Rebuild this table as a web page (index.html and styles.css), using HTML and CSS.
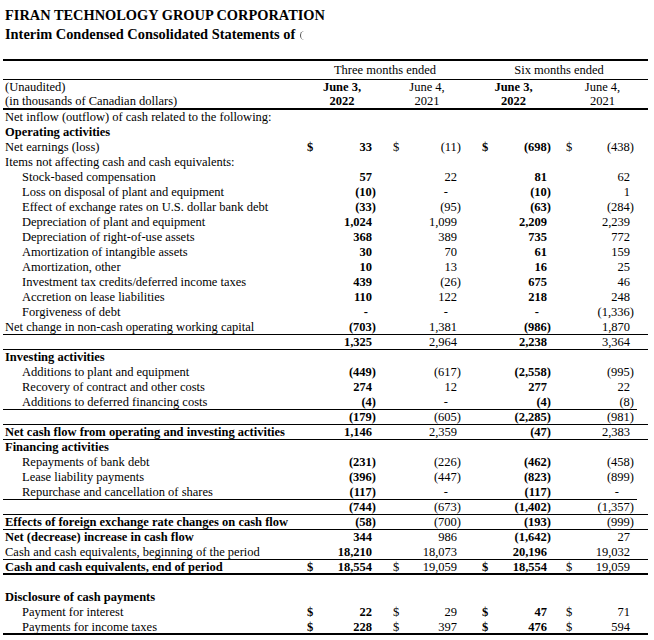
FILE: index.html
```html
<!DOCTYPE html>
<html>
<head>
<meta charset="utf-8">
<link rel="stylesheet" href="styles.css">
</head>
<body>
<div class="page">
  <h1 class="t1">FIRAN TECHNOLOGY GROUP CORPORATION</h1>
  <h2 class="t2">Interim Condensed Consolidated Statements of <span class="clip"></span></h2>
  <table class="cf">
    <colgroup>
      <col class="c0"><col class="c1"><col class="c2"><col class="c3"><col class="c4"><col class="c5"><col class="c6"><col class="c7"><col class="c8">
    </colgroup>
    <thead>
      <tr class="hr1"><td></td><td colspan="4" class="hc">Three months ended</td><td colspan="4" class="hc">Six months ended</td></tr>
      <tr class="hr2"><td class="l">(Unaudited)</td><td colspan="2" class="hc b">June 3,</td><td colspan="2" class="hc">June 4,</td><td colspan="2" class="hc b">June 3,</td><td colspan="2" class="hc">June 4,</td></tr>
      <tr class="hr3"><td class="l">(in thousands of Canadian dollars)</td><td colspan="2" class="hc b">2022</td><td colspan="2" class="hc">2021</td><td colspan="2" class="hc b">2022</td><td colspan="2" class="hc">2021</td></tr>
    </thead>
    <tbody>
      <tr><td class="l" colspan="9">Net inflow (outflow) of cash related to the following:</td></tr>
      <tr><td class="l b" colspan="9">Operating activities</td></tr>
      <tr><td class="l">Net earnings (loss)</td><td class="s">$</td><td class="v">33</td><td class="s">$</td><td class="v n">(11)</td><td class="s">$</td><td class="v n">(698)</td><td class="s">$</td><td class="v n">(438)</td></tr>
      <tr><td class="l" colspan="9">Items not affecting cash and cash equivalents:</td></tr>
      <tr><td class="l i">Stock-based compensation</td><td></td><td class="v">57</td><td></td><td class="v">22</td><td></td><td class="v">81</td><td></td><td class="v">62</td></tr>
      <tr><td class="l i">Loss on disposal of plant and equipment</td><td></td><td class="v n">(10)</td><td></td><td class="v d">-</td><td></td><td class="v n">(10)</td><td></td><td class="v">1</td></tr>
      <tr><td class="l i">Effect of exchange rates on U.S. dollar bank debt</td><td></td><td class="v n">(33)</td><td></td><td class="v n">(95)</td><td></td><td class="v n">(63)</td><td></td><td class="v n">(284)</td></tr>
      <tr><td class="l i">Depreciation of plant and equipment</td><td></td><td class="v">1,024</td><td></td><td class="v">1,099</td><td></td><td class="v">2,209</td><td></td><td class="v">2,239</td></tr>
      <tr><td class="l i">Depreciation of right-of-use assets</td><td></td><td class="v">368</td><td></td><td class="v">389</td><td></td><td class="v">735</td><td></td><td class="v">772</td></tr>
      <tr><td class="l i">Amortization of intangible assets</td><td></td><td class="v">30</td><td></td><td class="v">70</td><td></td><td class="v">61</td><td></td><td class="v">159</td></tr>
      <tr><td class="l i">Amortization, other</td><td></td><td class="v">10</td><td></td><td class="v">13</td><td></td><td class="v">16</td><td></td><td class="v">25</td></tr>
      <tr><td class="l i">Investment tax credits/deferred income taxes</td><td></td><td class="v">439</td><td></td><td class="v n">(26)</td><td></td><td class="v">675</td><td></td><td class="v">46</td></tr>
      <tr><td class="l i">Accretion on lease liabilities</td><td></td><td class="v">110</td><td></td><td class="v">122</td><td></td><td class="v">218</td><td></td><td class="v">248</td></tr>
      <tr><td class="l i">Forgiveness of debt</td><td></td><td class="v d">-</td><td></td><td class="v d">-</td><td></td><td class="v d">-</td><td></td><td class="v n">(1,336)</td></tr>
      <tr class="ul"><td class="l">Net change in non-cash operating working capital</td><td></td><td class="v n">(703)</td><td></td><td class="v">1,381</td><td></td><td class="v n">(986)</td><td></td><td class="v">1,870</td></tr>
      <tr class="ul"><td class="l"></td><td></td><td class="v">1,325</td><td></td><td class="v">2,964</td><td></td><td class="v">2,238</td><td></td><td class="v">3,364</td></tr>
      <tr><td class="l b" colspan="9">Investing activities</td></tr>
      <tr><td class="l i">Additions to plant and equipment</td><td></td><td class="v n">(449)</td><td></td><td class="v n">(617)</td><td></td><td class="v n">(2,558)</td><td></td><td class="v n">(995)</td></tr>
      <tr><td class="l i">Recovery of contract and other costs</td><td></td><td class="v">274</td><td></td><td class="v">12</td><td></td><td class="v">277</td><td></td><td class="v">22</td></tr>
      <tr class="ul sh"><td class="l i">Additions to deferred financing costs</td><td></td><td class="v n">(4)</td><td></td><td class="v d">-</td><td></td><td class="v n">(4)</td><td></td><td class="v n">(8)</td></tr>
      <tr class="ul"><td class="l"></td><td></td><td class="v n">(179)</td><td></td><td class="v n">(605)</td><td></td><td class="v n">(2,285)</td><td></td><td class="v n">(981)</td></tr>
      <tr class="ul"><td class="l b">Net cash flow from operating and investing activities</td><td></td><td class="v">1,146</td><td></td><td class="v">2,359</td><td></td><td class="v n">(47)</td><td></td><td class="v">2,383</td></tr>
      <tr><td class="l b" colspan="9">Financing activities</td></tr>
      <tr><td class="l i">Repayments of bank debt</td><td></td><td class="v n">(231)</td><td></td><td class="v n">(226)</td><td></td><td class="v n">(462)</td><td></td><td class="v n">(458)</td></tr>
      <tr><td class="l i">Lease liability payments</td><td></td><td class="v n">(396)</td><td></td><td class="v n">(447)</td><td></td><td class="v n">(823)</td><td></td><td class="v n">(899)</td></tr>
      <tr class="ul sh"><td class="l i">Repurchase and cancellation of shares</td><td></td><td class="v n">(117)</td><td></td><td class="v d">-</td><td></td><td class="v n">(117)</td><td></td><td class="v d">-</td></tr>
      <tr class="ul"><td class="l"></td><td></td><td class="v n">(744)</td><td></td><td class="v n">(673)</td><td></td><td class="v n">(1,402)</td><td></td><td class="v n">(1,357)</td></tr>
      <tr class="ul"><td class="l b">Effects of foreign exchange rate changes on cash flow</td><td></td><td class="v n">(58)</td><td></td><td class="v n">(700)</td><td></td><td class="v n">(193)</td><td></td><td class="v n">(999)</td></tr>
      <tr><td class="l b">Net (decrease) increase in cash flow</td><td></td><td class="v">344</td><td></td><td class="v">986</td><td></td><td class="v n">(1,642)</td><td></td><td class="v">27</td></tr>
      <tr class="ul"><td class="l">Cash and cash equivalents, beginning of the period</td><td></td><td class="v">18,210</td><td></td><td class="v">18,073</td><td></td><td class="v">20,196</td><td></td><td class="v">19,032</td></tr>
      <tr class="tk"><td class="l b">Cash and cash equivalents, end of period</td><td class="s">$</td><td class="v">18,554</td><td class="s">$</td><td class="v">19,059</td><td class="s">$</td><td class="v">18,554</td><td class="s">$</td><td class="v">19,059</td></tr>
      <tr><td class="l" colspan="9"></td></tr>
      <tr><td class="l b" colspan="9">Disclosure of cash payments</td></tr>
      <tr><td class="l i">Payment for interest</td><td class="s">$</td><td class="v">22</td><td class="s">$</td><td class="v">29</td><td class="s">$</td><td class="v">47</td><td class="s">$</td><td class="v">71</td></tr>
      <tr class="tk"><td class="l i">Payments for income taxes</td><td class="s">$</td><td class="v">228</td><td class="s">$</td><td class="v">397</td><td class="s">$</td><td class="v">476</td><td class="s">$</td><td class="v">594</td></tr>
    </tbody>
  </table>
</div>
</body>
</html>
```

FILE: styles.css
```css
html, body {
  margin: 0;
  padding: 0;
  background: #fff;
}
body {
  font-family: "Liberation Serif", "Times New Roman", serif;
  color: #000;
}
.page {
  padding: 6px 6px 0 3px;
}
.t1, .t2 {
  margin: 0;
  padding-left: 2px;
  font-size: 14.4px;
  line-height: 19px;
  font-weight: bold;
}
.t2 {
  margin-bottom: 15px;
}
.clip {
  display: inline-block;
  width: 5px;
  height: 9px;
  margin-left: 1px;
  box-sizing: border-box;
  border-left: 1.5px solid #555;
  border-radius: 5px 0 0 5px;
  vertical-align: -1px;
}
.cf {
  border-collapse: separate;
  border-spacing: 0;
  table-layout: fixed;
  width: 645px;
  font-size: 12.5px;
}
.c0 { width: 297px; }
.c1 { width: 16px; }
.c2 { width: 68px; }
.c3 { width: 18px; }
.c4 { width: 68px; }
.c5 { width: 20px; }
.c6 { width: 67px; }
.c7 { width: 18px; }
.c8 { width: 73px; }
.cf td {
  padding: 0;
  height: 15px;
  line-height: 15px;
  white-space: nowrap;
  vertical-align: middle;
}
.cf td.l {
  padding-left: 2px;
  text-align: left;
}
.cf td.l.i {
  padding-left: 19px;
}
.b {
  font-weight: bold;
}
.hc {
  text-align: center;
}
.cf .hr1 td {
  height: 20px;
  line-height: 16px;
  padding-top: 1px;
  box-shadow: inset 0 2px 0 #000, inset 0 -1px 0 #000;
}
.cf .hr2 td {
  height: 14px;
  line-height: 14px;
}
.cf .hr3 td {
  height: 16px;
  line-height: 14px;
  vertical-align: top;
  box-shadow: inset 0 -2px 0 #000;
}
.cf tbody td:nth-child(2),
.cf tbody td:nth-child(3),
.cf tbody td:nth-child(6),
.cf tbody td:nth-child(7) {
  font-weight: bold;
}
.cf td.s { text-align: left; }
.cf td.s:nth-child(2) { padding-left: 7px; }
.cf td.s:nth-child(4) { padding-left: 9px; }
.cf td.s:nth-child(6) { padding-left: 12px; }
.cf td.s:nth-child(8) { padding-left: 9px; }
.cf td.v { text-align: right; }
.cf td.v:nth-child(3) { padding-right: 12px; }
.cf td.v.n:nth-child(3) { padding-right: 8px; }
.cf td.v.d:nth-child(3) { padding-right: 16px; }
.cf td.v:nth-child(5) { padding-right: 13px; }
.cf td.v.n:nth-child(5) { padding-right: 9px; }
.cf td.v.d:nth-child(5) { padding-right: 22px; }
.cf td.v:nth-child(7) { padding-right: 10px; }
.cf td.v.n:nth-child(7) { padding-right: 6px; }
.cf td.v.d:nth-child(7) { padding-right: 18px; }
.cf td.v:nth-child(9) { padding-right: 18px; }
.cf td.v.n:nth-child(9) { padding-right: 14px; }
.cf td.v.d:nth-child(9) { padding-right: 29px; }
.cf .ul td {
  box-shadow: inset 0 -1px 0 #000;
}
.cf .ul.sh td:last-child {
  box-shadow: none;
  background: linear-gradient(#000, #000) left bottom / calc(100% - 11px) 1px no-repeat;
}
.cf .tk td {
  box-shadow: inset 0 -2px 0 #000;
}
```
